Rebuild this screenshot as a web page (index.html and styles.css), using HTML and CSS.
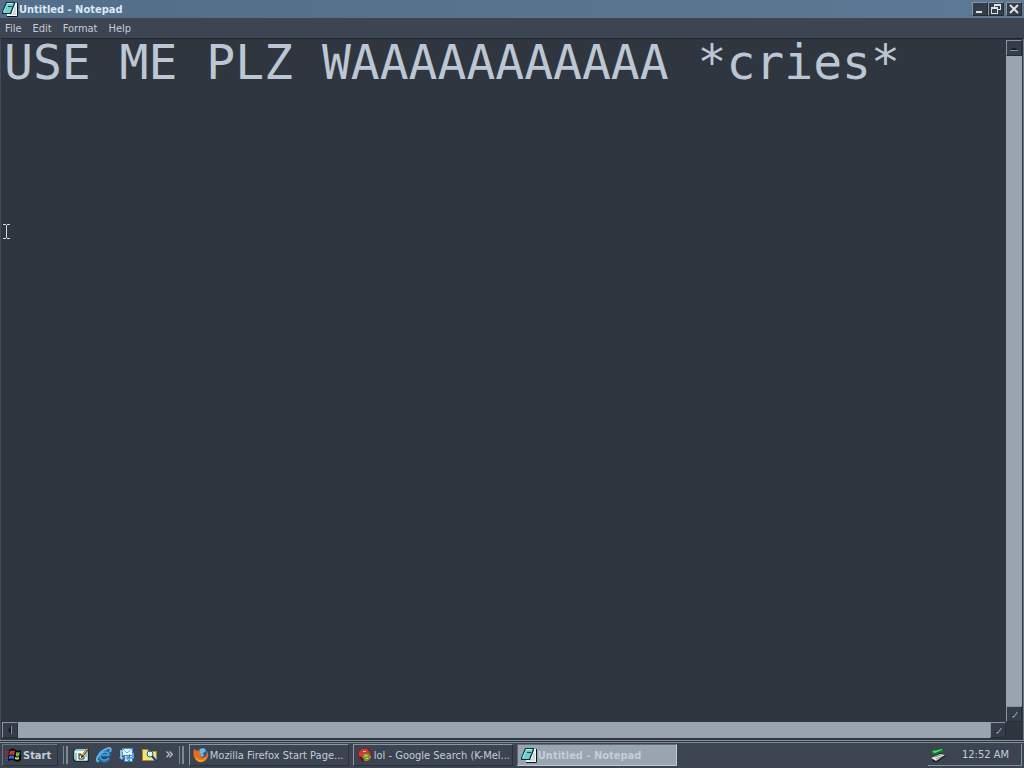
FILE: index.html
```html
<!DOCTYPE html>
<html lang="en">
<head>
  <meta charset="UTF-8">
  <meta name="viewport" content="width=device-width, initial-scale=1.0">
  <title>Untitled - Notepad</title>
  <link rel="stylesheet" href="styles.css">
</head>
<body>
  <!-- shared icons -->
  <svg class="defs" aria-hidden="true">
    <symbol id="notepad" viewBox="0 0 16 16">
      <path d="M13 2h3v13l-1 1H5v-2h6z" fill="#0a1216"/>
      <path d="M12 2h3v13H5v-2h4z" fill="#f4f8f6"/>
      <path d="M12 7h2M12 9h2M11 11h3M8 13h6" stroke="#a9bbc0"/>
      <path d="M4 1h9v2L9 13H0v-2z" fill="#0f3038"/>
      <path d="M5 2h7L8 12H1z" fill="#6fcfcd"/>
      <path d="M5 2h6l-1 1H5L2 11H1z" fill="#c4f7f2"/>
      <path d="M6 5h4v1H6z" fill="#174650"/>
    </symbol>
    <symbol id="arrow" viewBox="0 0 12 12">
      <path d="M3 7h1l2 2-1 1-2-2z" fill="#141a20"/>
      <path d="M4 8h2l3-4h1L7 8l-2 2z" fill="#a4afb9"/>
    </symbol>
  </svg>

  <main class="window">
    <header class="titlebar">
      <svg class="icon"><use href="#notepad"/></svg>
      <h1>Untitled - Notepad</h1>
      <div class="window-buttons">
        <button class="box" aria-label="Minimize"><svg viewBox="0 0 12 12"><path d="M2 8h6v2H2z"/></svg></button>
        <button class="box" aria-label="Restore"><svg viewBox="0 0 12 12"><path d="M4 1h7v6H8v4H1V4h3zM5 3v1h3v2h2V3zM2 6v4h5V6z" fill-rule="evenodd"/></svg></button>
        <button class="box close" aria-label="Close"><svg viewBox="0 0 12 12"><path d="M2 2l8 8M10 2l-8 8" fill="none" stroke="#dce2e7" stroke-width="2"/></svg></button>
      </div>
    </header>

    <nav class="menu">
      <button>File</button>
      <button>Edit</button>
      <button>Format</button>
      <button>Help</button>
    </nav>

    <section class="editor">
      <textarea class="text" aria-label="Document" spellcheck="false" wrap="off">USE ME PLZ WAAAAAAAAAAA *cries*</textarea>
      <div class="scroll vertical">
        <button class="box" aria-label="Scroll up"><svg viewBox="0 0 12 12"><path d="M2 8l3-2h2l3 2z" fill="#161c22"/><path d="M2 8h8v1H2z"/></svg></button>
        <div class="thumb"></div>
        <button class="box" aria-label="Scroll down"><svg><use href="#arrow"/></svg></button>
      </div>
      <div class="scroll horizontal">
        <button class="box" aria-label="Scroll left"><svg viewBox="0 0 12 12"><path d="M4 6l3-4v8z" fill="#161c22"/><path d="M7 2h1v8H7z"/></svg></button>
        <div class="thumb"></div>
        <button class="box" aria-label="Scroll right"><svg><use href="#arrow"/></svg></button>
      </div>
      <svg class="cursor" viewBox="0 0 8 16"><path d="M0 0h3v1h1V0h3v1H4v13h3v1H4v-1H3v1H0v-1h3V1H0z" fill="#d5dade"/></svg>
    </section>
  </main>

  <footer class="taskbar">
    <button class="start">
      <svg class="icon" viewBox="0 0 16 16">
        <path d="M0 4h2v2H0zM1 7h3v1H1zM0 10h3v2H0zM3 4h2v2H3zM3 12h2v1H3z" fill="#a22b24"/>
        <path d="M0 11h4v1H0zM1 13h3v1H1z" fill="#2b4fae"/>
        <path d="M4 3q4-3 7 0 2 1 5 0v10q-3 3-6 1-3-2-7 0z" fill="#07090e"/>
        <path d="M5 4q3-1 5 0L9 8Q7 7 4 8z" fill="#d0382e"/>
        <path d="M11 5q2 1 4 0l-1 4q-2 1-3 0z" fill="#79b34b"/>
        <path d="M4 9q3-1 5 0v3q-2-1-5 0z" fill="#3267e0"/>
        <path d="M10 10q2 1 4 0v2q-2 1-4 0z" fill="#ecd94a"/>
      </svg>
      Start
    </button>
    <div class="grip"></div>
    <nav class="quick">
      <button aria-label="Show desktop">
        <svg class="icon" viewBox="0 0 16 16">
          <path d="M2 2h12l2 2v11H2l-2-2V4z" fill="#1b282c"/>
          <path d="M3 2h10l2 2v9l-1 1H3l-2-2V4z" fill="#93cfd0"/>
          <path d="M2 4h3v2H2zM12 10h2v3h-2z" fill="#d5f6ef"/>
          <path d="M4 4h8v9H4z" fill="#fffdf0"/>
          <path d="M5 7h3v1H6v4h5V9" fill="none" stroke="#2b2a25"/>
          <path d="M8 9l6-8 2 1-6 8-2 1z" fill="#2a211a"/>
          <path d="M9 8l5-7 1 1-5 7z" fill="#eda33d"/>
        </svg>
      </button>
      <button aria-label="Internet Explorer">
        <svg class="icon" viewBox="0 0 16 16">
          <path d="M13 11q-2 4-6 3-4-1-4-5 1-5 6-5 4 0 4 4H5" fill="none" stroke="#1c75bd" stroke-width="3"/>
          <path d="M13 11q-3 3-6 2-3-1-3-4 1-4 5-4 4 0 4 3H6" fill="none" stroke="#65b8ee"/>
          <path d="M3 14Q-1 15 2 9 7 2 13 1q3 0 1 4" fill="none" stroke="#62b1e5" stroke-width="2"/>
        </svg>
      </button>
      <button aria-label="Outlook Express">
        <svg class="icon" viewBox="0 0 16 16">
          <path d="M3 1h11v8H3z" fill="#4d92d5"/>
          <path d="M4 2h9v6H4z" fill="#eaf6ff"/>
          <path d="M4 2l4 4 5-4" fill="none" stroke="#73a6d8"/>
          <path d="M5 8h9v7H5z" fill="#3d81c7"/>
          <path d="M6 9h7v5H6z" fill="#d9ecfa"/>
          <path d="M1 3h3v2H3v5H1zM0 10h5l-2 3z" fill="#85c3f4"/>
          <path d="M15 5v7h-4v3l-5-4 5-4v3h2V5z" fill="#2673bf"/>
          <path d="M14 6v5h-4v2l-3-2 3-2" fill="none" stroke="#92cdf8"/>
        </svg>
      </button>
      <button aria-label="Search files">
        <svg class="icon" viewBox="0 0 16 16">
          <path d="M0 2h6l1 2h8v10H0z" fill="#a98b30"/>
          <path d="M1 3h4l1 2h8v8H1z" fill="#f4e477"/>
          <circle cx="8" cy="7" r="3" fill="#d9f6ff" stroke="#315d70"/>
          <path d="M10 9l5 6" stroke="#1d3c96" stroke-width="2"/>
        </svg>
      </button>
      <button class="more" aria-label="More">»</button>
    </nav>
    <div class="grip"></div>
    <nav class="tasks">
      <button class="task">
        <svg class="icon" viewBox="0 0 16 16">
          <circle cx="9" cy="7" r="6" fill="#285d99"/>
          <path d="M7 2l4-1 2 3-3 2 1 3-3 1-2-3z" fill="#75b8d8"/>
          <path d="M1 2l3 2 3-1-1 3 3 1-2 2 2 2 3-1 2-3V4q3 5-1 9-4 4-9 1-5-4-3-12z" fill="#e86d1d"/>
          <path d="M2 9q3 5 8 4l3-3q-1 5-6 5-4-1-5-6z" fill="#f6a62f"/>
        </svg>
        <span>Mozilla Firefox Start Page...</span>
      </button>
      <button class="task">
        <svg class="icon" viewBox="0 0 16 16">
          <path d="M5 1h6l4 5v5l-4 4H5l-4-4V5z" fill="#7d2428"/>
          <path d="M5 2h5l4 5-5-1-4 4-3-1V5z" fill="#c93d3b"/>
          <path d="M7 7l4-1 3 3v2l-3 3H7l-2-4z" fill="#6e9b3a"/>
          <path d="M8 7l3 1-1 2H7z" fill="#c0b64a"/>
          <path d="M6 4h3v1H6zM9 11h2v1H9z" fill="#edcf79"/>
          <path d="M3 10l3 1 1 3H5z" fill="#331d20"/>
        </svg>
        <span>lol - Google Search (K-Mel...</span>
      </button>
      <button class="task active">
        <svg class="icon"><use href="#notepad"/></svg>
        <span>Untitled - Notepad</span>
      </button>
    </nav>
    <div class="tray">
      <svg class="icon" viewBox="0 0 16 16">
        <path d="M1 11l9-5 6 3-9 6H4z" fill="#111a19"/>
        <path d="M1 11l9-4 5 1-9 6z" fill="#e2e5df"/>
        <path d="M5 10l6-2M6 12l7-3" stroke="#87918b"/>
        <path d="M1 5l4-4v2l8-2v4L6 7v2z" fill="#0d7a2b"/>
        <path d="M2 5l3-2v1l7-2v1L5 6z" fill="#56e070"/>
      </svg>
      <time>12:52 AM</time>
    </div>
  </footer>
</body>
</html>
```

FILE: styles.css
```css
* {
  box-sizing: border-box;
}
body {
  margin: 0;
  height: 100vh;
  display: flex;
  flex-direction: column;
  overflow: hidden;
  background: #3b4450;
  color: #c3cdd8;
  font: 11px "DejaVu Sans Condensed", "DejaVu Sans", sans-serif;
}
button {
  margin: 0;
  padding: 0;
  border: none;
  background: none;
  color: inherit;
  font: inherit;
}
.defs {
  display: none;
}
.icon {
  display: block;
  flex: none;
  width: 16px;
  height: 16px;
}
.window {
  flex: 1;
  min-height: 0;
  display: flex;
  flex-direction: column;
}
.titlebar {
  display: flex;
  align-items: center;
  gap: 1px;
  height: 18px;
  padding: 0 2px;
  background: linear-gradient(to right, #526e88, #5c7995);
  color: #dce9f4;
}
.titlebar h1 {
  flex: 1;
  margin: 0;
  font-size: 11px;
}
.window-buttons {
  display: flex;
}
.close {
  margin-left: 2px;
}
/* small square buttons: caption and scroll arrows */
.box {
  display: grid;
  place-items: center;
  flex: none;
  width: 16px;
  height: 14px;
  border: 1px solid #252d36;
  border-top-color: #8794a1;
  border-left-color: #8794a1;
  background: #343d48;
}
.box svg {
  width: 12px;
  height: 12px;
  fill: #dce2e7;
}
.menu {
  display: flex;
  gap: 11px;
  height: 20px;
  padding: 0 5px;
  background: #3c4551;
}
.editor {
  position: relative;
  flex: 1;
  min-height: 0;
  display: grid;
  grid-template-columns: 1fr 16px;
  grid-template-rows: 1fr 16px;
  padding: 1px 1px 2px;
  border-top: 1px solid #20272f;
  border-left: 1px solid #424c58;
  border-right: 1px solid #697683;
  background: #30363f;
}
.text {
  width: 100%;
  height: 100%;
  padding: 0 2px;
  border: none;
  outline: none;
  resize: none;
  overflow: hidden;
  background: transparent;
  color: #bcc7d3;
  font: 48px/44px "DejaVu Sans Mono", monospace;
}
.scroll {
  display: flex;
}
.scroll .box {
  width: 16px;
  height: 16px;
}
.scroll .box svg {
  fill: #8995a0;
}
.vertical {
  flex-direction: column;
}
.thumb {
  flex: 1;
  background: #99a4ae;
}
.cursor {
  position: absolute;
  top: 185px;
  left: 2px;
  width: 8px;
  height: 16px;
}
.taskbar {
  display: flex;
  align-items: center;
  height: 28px;
  padding: 1px 2px 0;
  border-top: 1px solid #84909c;
  background: #3b4450;
  box-shadow: inset 0 1px #29313a, inset 0 2px #84909c;
}
.start {
  display: flex;
  align-items: center;
  gap: 2px;
  width: 56px;
  height: 22px;
  padding: 0 2px;
  border: 1px solid #29313a;
  border-top-color: #6c7885;
  border-left-color: #6c7885;
  font-weight: bold;
}
.grip {
  width: 5px;
  height: 18px;
  margin-left: 5px;
  border-left: 1px solid #7c8894;
  border-right: 2px solid #7c8894;
}
.quick {
  display: flex;
  align-items: center;
  gap: 7px;
  margin-left: 5px;
}
.more {
  height: 22px;
  padding-bottom: 6px;
  font-size: 16px;
}
.tasks {
  flex: 1;
  display: flex;
  gap: 4px;
  margin-left: 5px;
}
.task {
  display: flex;
  align-items: center;
  gap: 1px;
  width: 160px;
  height: 22px;
  padding: 0 3px;
  border: 1px solid #29313a;
  border-top-color: #8a96a2;
  border-left-color: #8a96a2;
  white-space: nowrap;
}
.active {
  border-color: #606c78 #c0c9d1 #c0c9d1 #606c78;
  background: #98a4af;
  color: #c5ced6;
  font-weight: bold;
}
.tray {
  display: flex;
  align-items: center;
  justify-content: space-between;
  width: 94px;
  height: 22px;
  padding: 0 12px 0 2px;
  border-right: 1px solid #84909c;
  border-bottom: 1px solid #84909c;
}
```
